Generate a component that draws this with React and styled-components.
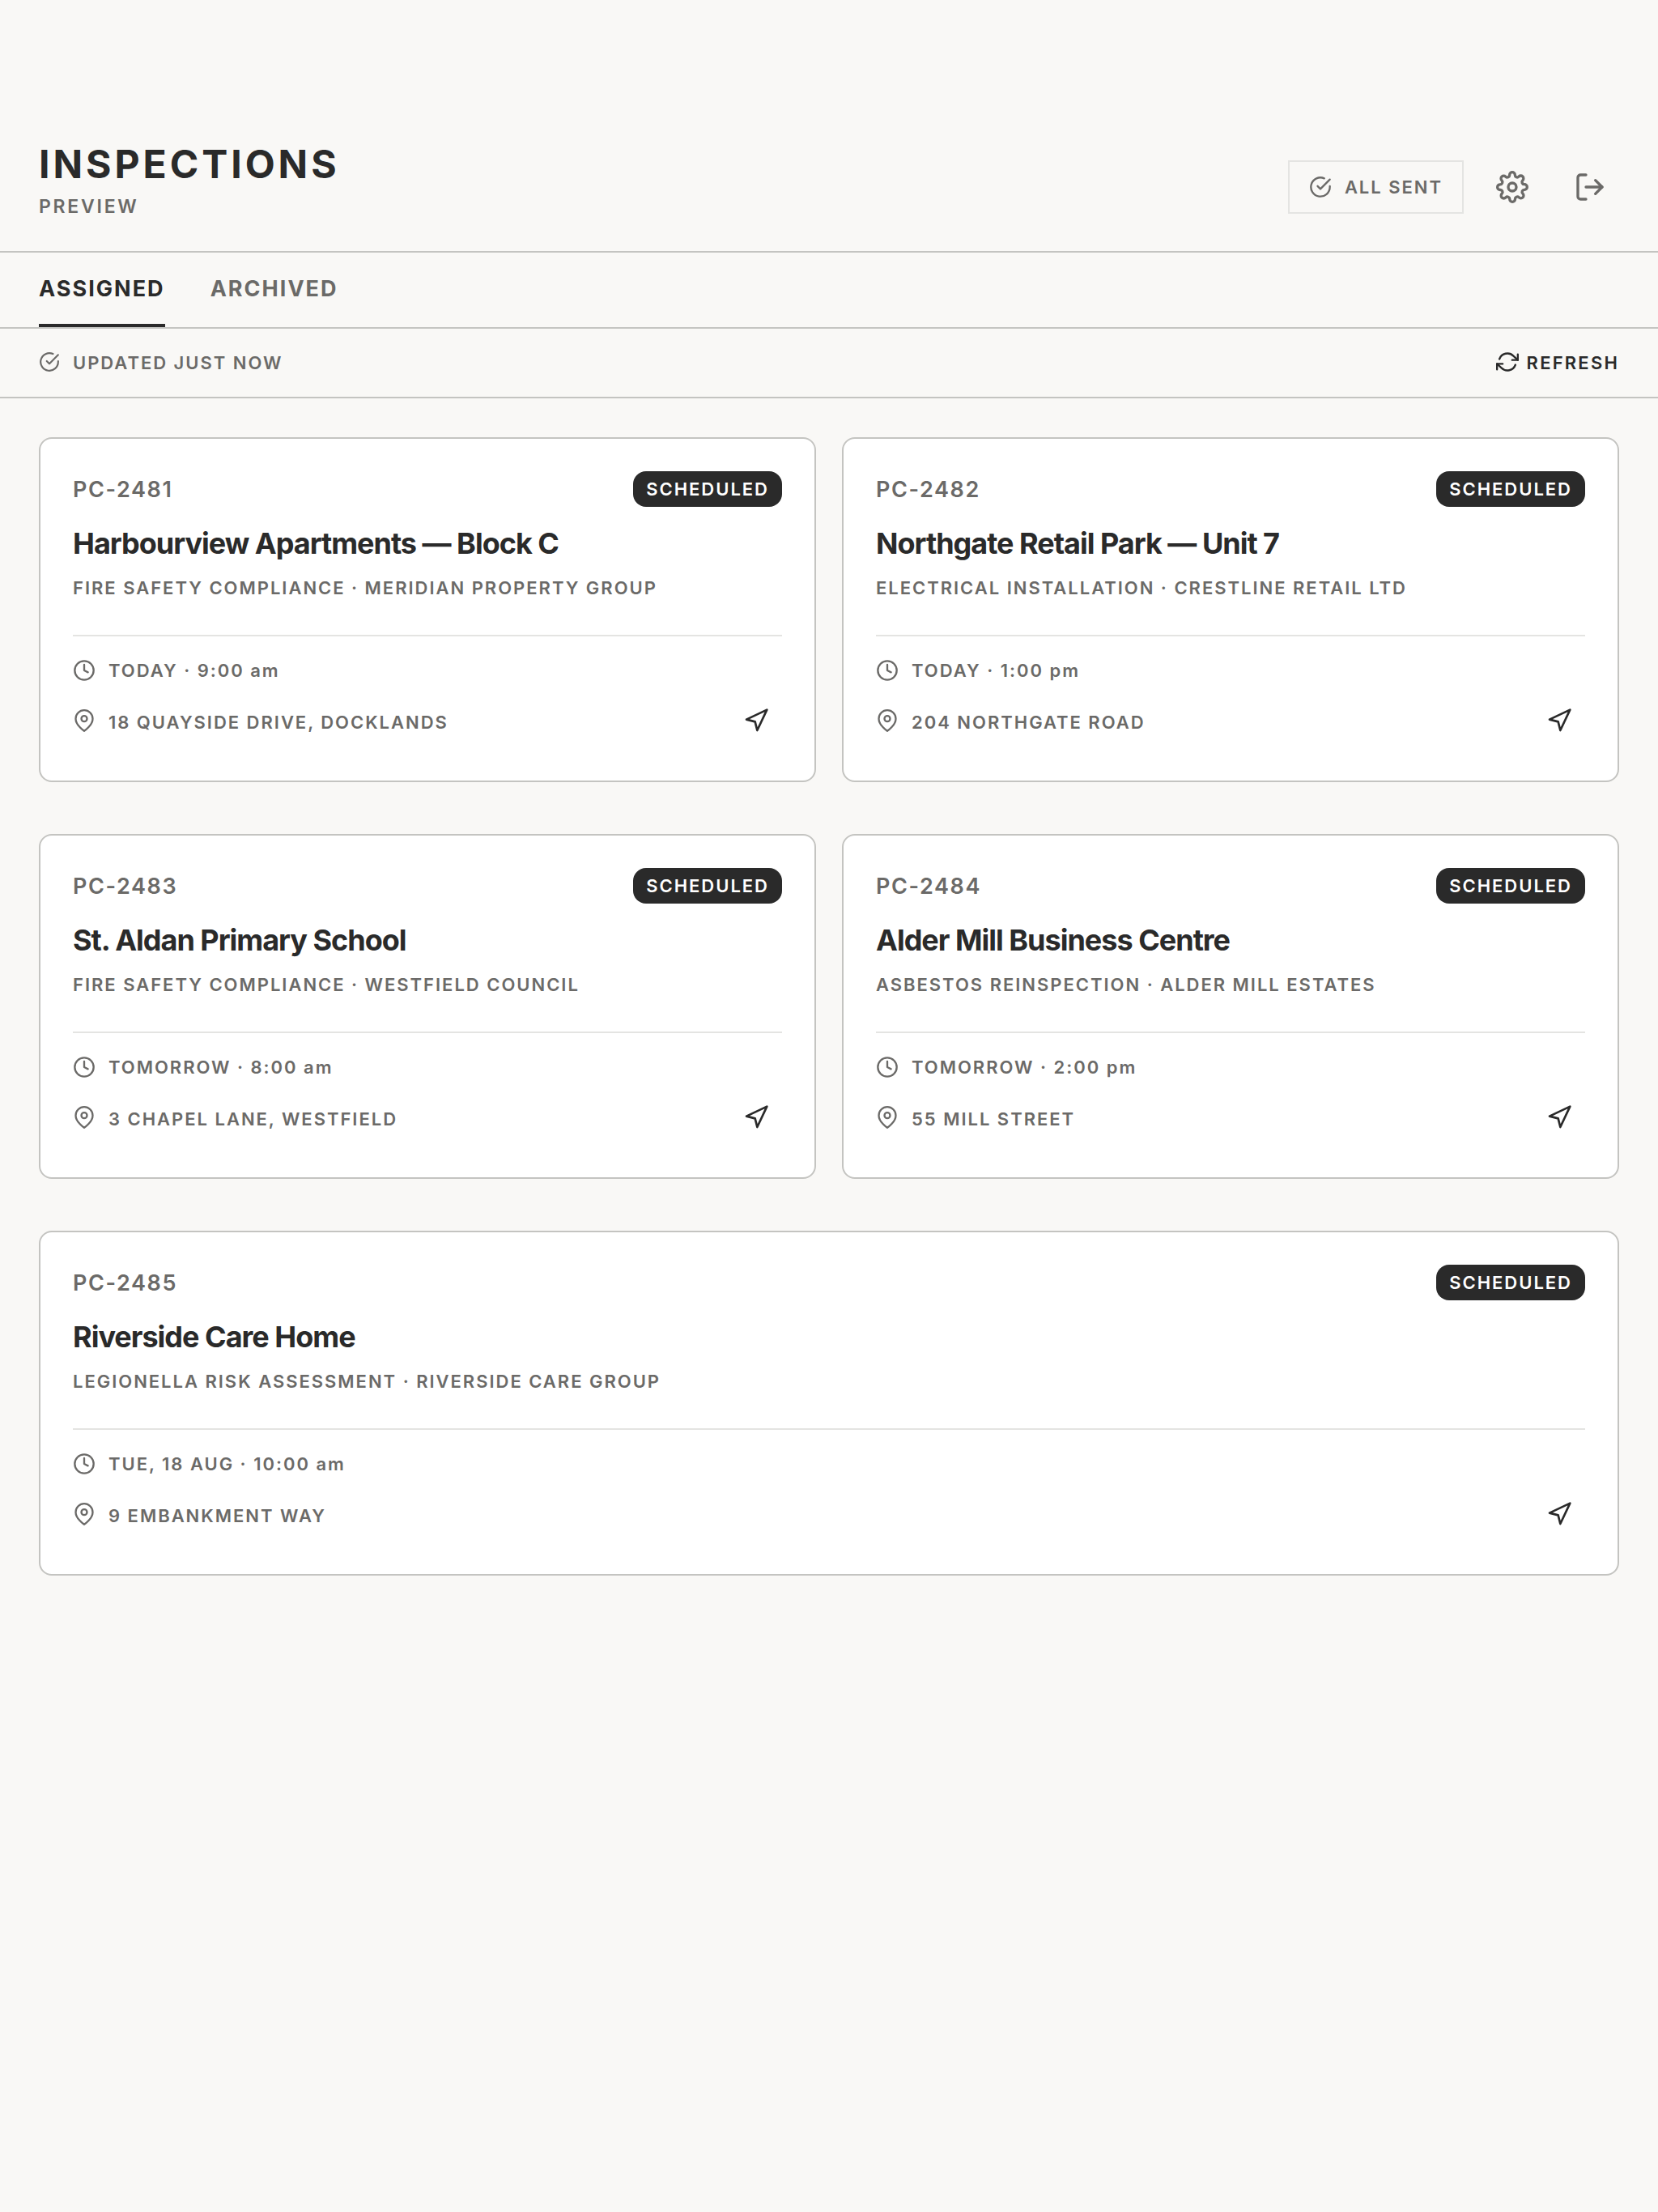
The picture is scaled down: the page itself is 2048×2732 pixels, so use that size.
import React from "react";
import styled, { createGlobalStyle } from "styled-components";
import { FiCheckCircle, FiSettings, FiLogOut, FiRefreshCw, FiClock, FiMapPin, FiNavigation } from "react-icons/fi";

const ink = "#2a2a2a";
const muted = "#6b6a68";
const line = "#c4c4c1";
const hair = "#e4e4e2";

const Global = createGlobalStyle`
  html, body { margin: 0; padding: 0; background: #f9f8f6; }
  body { font-family: Inter, "Liberation Sans", sans-serif; color: ${ink}; }
  * { box-sizing: border-box; }
`;

const Page = styled.div`
  min-height: 2732px;
  background: #f9f8f6;
  display: flex;
  flex-direction: column;
`;

const Header = styled.header`
  height: 312px;
  padding: 173px 48px 0;
  border-bottom: 2px solid ${line};
  display: flex;
  justify-content: space-between;
  align-items: flex-start;
`;

const TitleBlock = styled.div`
  display: flex;
  flex-direction: column;
  gap: 7px;
`;

const Title = styled.h1`
  margin: 0;
  font-size: 48px;
  line-height: 60px;
  font-weight: 700;
  letter-spacing: 0.083em;
`;

const Subtitle = styled.div`
  font-size: 23px;
  line-height: 30px;
  font-weight: 600;
  letter-spacing: 0.12em;
  color: ${muted};
`;

const Actions = styled.div`
  display: flex;
  align-items: center;
  gap: 24px;
  margin-top: 22px;
`;

const SentBadge = styled.div`
  display: flex;
  align-items: center;
  gap: 16px;
  height: 66px;
  padding: 0 24px;
  border: 2px solid ${hair};
  font-size: 22px;
  font-weight: 600;
  letter-spacing: 0.09em;
  color: ${muted};
`;

const IconButton = styled.button`
  width: 72px;
  height: 72px;
  padding: 0;
  border: 0;
  background: none;
  color: ${muted};
  display: flex;
  align-items: center;
  justify-content: center;
`;

const Tabs = styled.nav`
  height: 94px;
  padding: 0 48px;
  border-bottom: 2px solid ${line};
  display: flex;
  gap: 56px;
`;

const Tab = styled.div`
  height: 92px;
  display: flex;
  align-items: center;
  font-size: 27px;
  font-weight: 700;
  letter-spacing: 0.075em;
  color: ${(p) => (p.$active ? ink : muted)};
  border-bottom: 4px solid ${(p) => (p.$active ? ink : "transparent")};
`;

const StatusBar = styled.div`
  height: 86px;
  padding: 0 48px;
  border-bottom: 2px solid ${line};
  display: flex;
  align-items: center;
  justify-content: space-between;
`;

const Updated = styled.div`
  display: flex;
  align-items: center;
  gap: 16px;
  font-size: 22px;
  font-weight: 600;
  letter-spacing: 0.09em;
  color: ${muted};
  svg { margin-top: -3px; }
`;

const Refresh = styled.div`
  display: flex;
  align-items: center;
  gap: 10px;
  font-size: 22px;
  font-weight: 600;
  letter-spacing: 0.1em;
  color: ${ink};
  svg { margin-top: -3px; }
`;

const Grid = styled.main`
  padding: 48px;
  display: grid;
  grid-template-columns: 1fr 1fr;
  column-gap: 32px;
  row-gap: 64px;
`;

const Card = styled.article`
  grid-column: ${(p) => (p.$wide ? "1 / -1" : "auto")};
  height: 426px;
  padding: 40px;
  background: #fff;
  border: 2px solid ${line};
  border-radius: 16px;
  display: flex;
  flex-direction: column;
`;

const CardTop = styled.div`
  display: flex;
  align-items: center;
  justify-content: space-between;
`;

const JobId = styled.div`
  font-size: 27px;
  font-weight: 600;
  letter-spacing: 0.059em;
  color: ${muted};
`;

const Pill = styled.div`
  height: 44px;
  padding: 0 16px;
  border-radius: 16px;
  background: ${ink};
  color: #fff;
  display: flex;
  align-items: center;
  font-size: 22px;
  font-weight: 600;
  letter-spacing: 0.09em;
`;

const CardTitle = styled.h2`
  margin: 23px 0 0;
  font-size: 36px;
  line-height: 44px;
  font-weight: 700;
  letter-spacing: -1px;
`;

const CardSub = styled.div`
  margin-top: 18px;
  font-size: 22px;
  line-height: 30px;
  font-weight: 600;
  letter-spacing: 0.09em;
  color: ${muted};
`;

const Divider = styled.hr`
  margin: 43px 0 0;
  height: 2px;
  border: 0;
  background: ${hair};
`;

const Bottom = styled.div`
  margin-top: 28px;
  display: flex;
  justify-content: space-between;
  align-items: flex-end;
`;

const Meta = styled.div`
  display: flex;
  flex-direction: column;
  gap: 36px;
`;

const MetaRow = styled.div`
  display: flex;
  align-items: center;
  gap: 16px;
  height: 28px;
  font-size: 22px;
  font-weight: 600;
  letter-spacing: 0.09em;
  color: ${muted};
  svg { margin-top: ${(p) => p.$lift}; }
`;

const NavButton = styled.button`
  width: 64px;
  height: 64px;
  margin-bottom: -16px;
  padding: 0;
  border: 0;
  background: none;
  color: ${ink};
  display: flex;
  align-items: center;
  justify-content: center;
`;

const jobs = [
  ["PC-2481", "Harbourview Apartments — Block C", "FIRE SAFETY COMPLIANCE · MERIDIAN PROPERTY GROUP", "TODAY · 9:00 am", "18 QUAYSIDE DRIVE, DOCKLANDS"],
  ["PC-2482", "Northgate Retail Park — Unit 7", "ELECTRICAL INSTALLATION · CRESTLINE RETAIL LTD", "TODAY · 1:00 pm", "204 NORTHGATE ROAD"],
  ["PC-2483", "St. Aldan Primary School", "FIRE SAFETY COMPLIANCE · WESTFIELD COUNCIL", "TOMORROW · 8:00 am", "3 CHAPEL LANE, WESTFIELD"],
  ["PC-2484", "Alder Mill Business Centre", "ASBESTOS REINSPECTION · ALDER MILL ESTATES", "TOMORROW · 2:00 pm", "55 MILL STREET"],
  ["PC-2485", "Riverside Care Home", "LEGIONELLA RISK ASSESSMENT · RIVERSIDE CARE GROUP", "TUE, 18 AUG · 10:00 am", "9 EMBANKMENT WAY"],
];

export default function App() {
  return (
    <Page>
      <Global />
      <Header>
        <TitleBlock>
          <Title>INSPECTIONS</Title>
          <Subtitle>PREVIEW</Subtitle>
        </TitleBlock>
        <Actions>
          <SentBadge>
            <FiCheckCircle size={28} />
            ALL SENT
          </SentBadge>
          <IconButton><FiSettings size={40} /></IconButton>
          <IconButton><FiLogOut size={40} /></IconButton>
        </Actions>
      </Header>
      <Tabs>
        <Tab $active>ASSIGNED</Tab>
        <Tab>ARCHIVED</Tab>
      </Tabs>
      <StatusBar>
        <Updated><FiCheckCircle size={26} />UPDATED JUST NOW</Updated>
        <Refresh><FiRefreshCw size={28} />REFRESH</Refresh>
      </StatusBar>
      <Grid>
        {jobs.map(([id, title, sub, when, where], i) => (
          <Card key={id} $wide={i === 4}>
            <CardTop>
              <JobId>{id}</JobId>
              <Pill>SCHEDULED</Pill>
            </CardTop>
            <CardTitle>{title}</CardTitle>
            <CardSub>{sub}</CardSub>
            <Divider />
            <Bottom>
              <Meta>
                <MetaRow $lift="-1px"><FiClock size={28} />{when}</MetaRow>
                <MetaRow $lift="-5px"><FiMapPin size={28} />{where}</MetaRow>
              </Meta>
              <NavButton><FiNavigation size={32} /></NavButton>
            </Bottom>
          </Card>
        ))}
      </Grid>
    </Page>
  );
}
